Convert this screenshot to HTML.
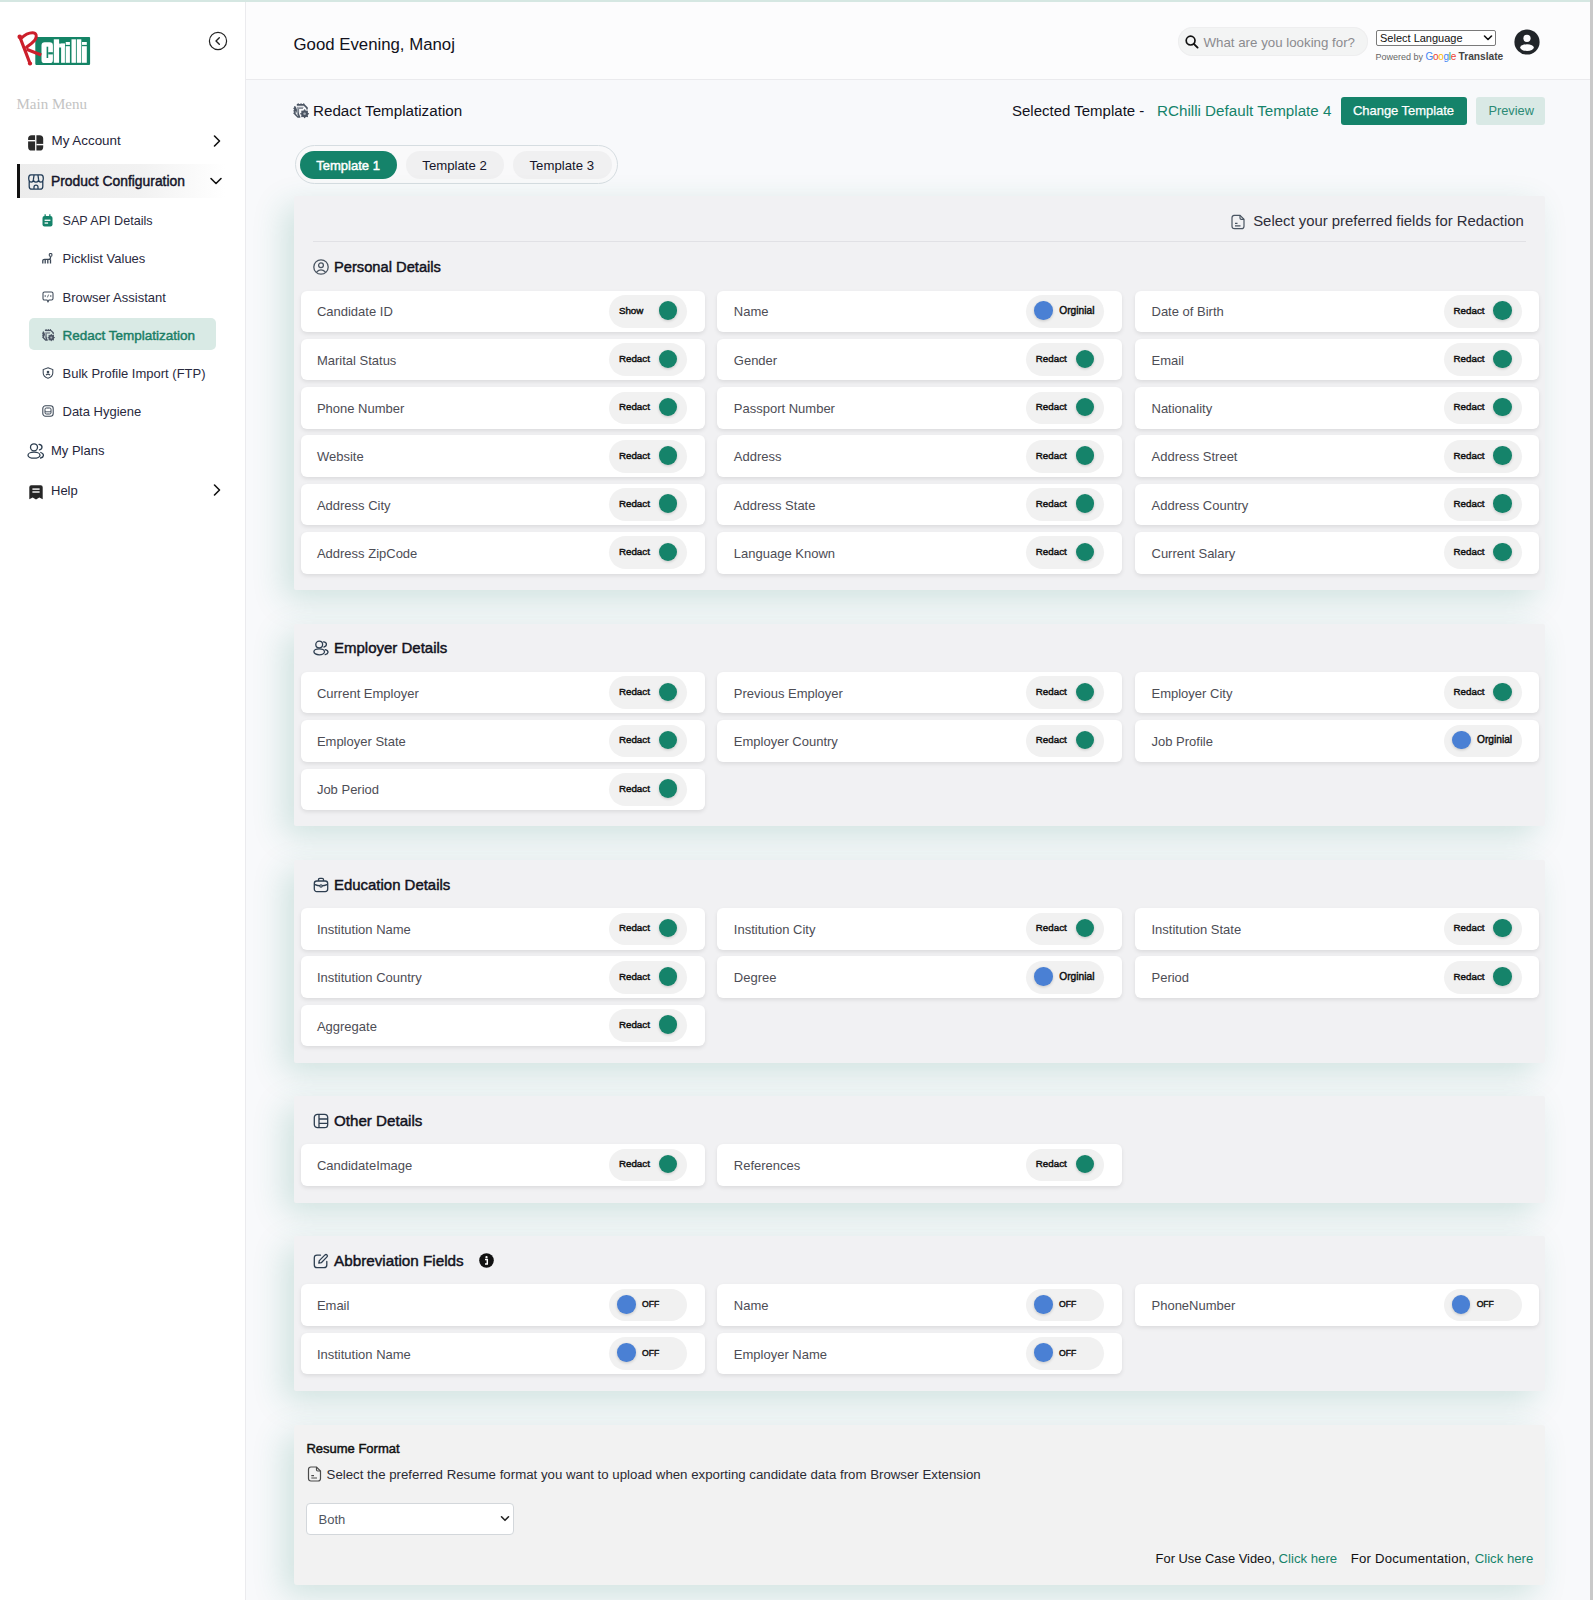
<!DOCTYPE html><html><head><meta charset="utf-8"><style>
html,body{margin:0;padding:0;width:1593px;height:1600px;overflow:hidden;background:#f8f9fb;font-family:"Liberation Sans",sans-serif;}
.t{position:absolute;white-space:nowrap;}
.r{position:absolute;}
</style></head><body>
<div class="r" style="left:0px;top:0px;width:1593px;height:2px;background:#d5e7e2"></div>
<div class="r" style="left:0px;top:2px;width:245px;height:1598px;background:#fff"></div>
<div class="r" style="left:245px;top:2px;width:1px;height:1598px;background:#ebebee"></div>
<div class="r" style="left:246px;top:2px;width:1344px;height:77px;background:#fcfcfd"></div>
<div class="r" style="left:246px;top:79px;width:1344px;height:1px;background:#eaeaed"></div>
<svg class="r" style="left:10px;top:25px;" width="90" height="45" viewBox="0 0 90 45">
<rect x="25.3" y="11.9" width="54.8" height="28" rx="0.8" fill="#148466"/>
<rect x="31.5" y="17.2" width="11.4" height="20.9" rx="3.2" fill="#fff"/><rect x="43.8" y="14.3" width="5.300000000000001" height="23.5" fill="#fff"/><rect x="49.1" y="18.6" width="5.799999999999997" height="3.9000000000000004" fill="#fff"/><rect x="51.1" y="18.6" width="3.799999999999997" height="19.200000000000003" fill="#fff"/><rect x="55.7" y="17" width="4.199999999999999" height="2.9000000000000004" fill="#fff"/><rect x="55.7" y="21.2" width="4.199999999999999" height="16.6" fill="#fff"/><rect x="61.5" y="14.3" width="4.399999999999999" height="23.5" fill="#fff"/><rect x="66.8" y="14.3" width="4.5" height="23.5" fill="#fff"/><rect x="72" y="17" width="4.799999999999997" height="2.9000000000000004" fill="#fff"/><rect x="72" y="21.2" width="4.799999999999997" height="16.6" fill="#fff"/>
<rect x="36.6" y="21.7" width="1.6" height="11.3" fill="#148466"/>
<rect x="38.2" y="27.2" width="4.7" height="2.2" fill="#148466"/>
<path d="M9.75 11.75 L20 38.5" stroke="#cc1f2b" stroke-width="3.2" stroke-linecap="round" fill="none"/>
<path d="M11 13.5 C15 9.5 19 7.8 22.5 7.8 C26.5 7.8 27 11 25.5 14 C24 17 20 19.5 16.5 22.25" stroke="#cc1f2b" stroke-width="3" stroke-linecap="round" fill="none"/>
<path d="M16.5 24.25 L31.25 30" stroke="#cc1f2b" stroke-width="3.2" stroke-linecap="butt" fill="none"/>
<circle cx="9.75" cy="11.75" r="2.3" fill="#cc1f2b"/>
<circle cx="20" cy="38.5" r="2.1" fill="#cc1f2b"/>
</svg>
<svg class="r" style="left:208px;top:31px;" width="20" height="20" viewBox="0 0 20 20"><circle cx="10" cy="10" r="8.6" stroke="#222" stroke-width="1.2" fill="none"/><path d="M11.3 6.8 L8 10 L11.3 13.2" stroke="#222" stroke-width="1.4" fill="none" stroke-linecap="round" stroke-linejoin="round"/></svg>
<div class="t" style="left:16.5px;top:94.00px;line-height:20px;font-size:15px;font-weight:400;color:#c3c3c3;font-family:'Liberation Serif', serif;">Main Menu</div>
<svg class="r" style="left:28px;top:134.5px;" width="16" height="16" viewBox="0 0 16 16"><rect x="0.1" y="0.2" width="15.1" height="15.3" rx="3.6" fill="#2b2b2b"/><rect x="7.1" y="0" width="1.3" height="16" fill="#fff"/><rect x="0" y="5" width="7.1" height="1.4" fill="#fff"/><rect x="8.4" y="8.9" width="8" height="1.4" fill="#fff"/></svg>
<div class="t" style="left:51.5px;top:131.00px;line-height:20px;font-size:13.4px;font-weight:400;color:#25253a;font-family:'Liberation Sans', sans-serif;">My Account</div>
<svg class="r" style="left:210px;top:133px;" width="14" height="16" viewBox="0 0 14 16"><path d="M4.5 3 L9.5 8 L4.5 13" stroke="#111" stroke-width="1.6" fill="none" stroke-linecap="round" stroke-linejoin="round"/></svg>
<div class="r" style="left:17px;top:164px;width:208px;height:34px;background:linear-gradient(90deg,#ececec 0%,#f2f2f2 60%,#ffffff 100%)"></div>
<div class="r" style="left:17px;top:164px;width:3px;height:34px;background:#111"></div>
<svg class="r" style="left:28px;top:174px;" width="16" height="16" viewBox="0 0 16 16"><path d="M2.8 0.8 H13.2 Q15.3 0.8 15.3 4.3 Q15.3 8 12.9 8 Q10.6 8 10.6 5.4 Q10.6 8 8 8 Q5.4 8 5.4 5.4 Q5.4 8 3.1 8 Q0.7 8 0.7 4.3 Q0.7 0.8 2.8 0.8 Z M5.4 5.4 L6.1 0.8 M10.6 5.4 L9.9 0.8 M1.2 7.2 V12.4 Q1.2 15.2 4 15.2 H12 Q14.8 15.2 14.8 12.4 V7.2 M6 15.2 V13 Q6 11 8 11 Q10 11 10 13 V15.2" stroke="#1f3a56" stroke-width="1.25" fill="none" stroke-linejoin="round"/></svg>
<div class="t" style="left:51px;top:171.00px;line-height:20px;font-size:13.85px;font-weight:400;color:#15152a;font-family:'Liberation Sans', sans-serif;-webkit-text-stroke:0.45px #15152a;">Product Configuration</div>
<svg class="r" style="left:208px;top:173px;" width="16" height="16" viewBox="0 0 16 16"><path d="M3 5.5 L8 10.5 L13 5.5" stroke="#111" stroke-width="1.6" fill="none" stroke-linecap="round" stroke-linejoin="round"/></svg>
<div class="r" style="left:29px;top:318.2px;width:186.5px;height:32.3px;background:#d9eae5;border-radius:5px"></div>
<div class="t" style="left:62.5px;top:210.80px;line-height:20px;font-size:12.6px;font-weight:400;color:#2a2a3e;font-family:'Liberation Sans', sans-serif;">SAP API Details</div>
<div class="t" style="left:62.5px;top:249.00px;line-height:20px;font-size:13px;font-weight:400;color:#2a2a3e;font-family:'Liberation Sans', sans-serif;">Picklist Values</div>
<div class="t" style="left:62.5px;top:287.60px;line-height:20px;font-size:13px;font-weight:400;color:#2a2a3e;font-family:'Liberation Sans', sans-serif;">Browser Assistant</div>
<div class="t" style="left:62.5px;top:325.60px;line-height:20px;font-size:13.5px;font-weight:400;color:#1b7e66;font-family:'Liberation Sans', sans-serif;-webkit-text-stroke:0.45px #1b7e66;">Redact Templatization</div>
<div class="t" style="left:62.5px;top:364.00px;line-height:20px;font-size:13px;font-weight:400;color:#2a2a3e;font-family:'Liberation Sans', sans-serif;">Bulk Profile Import (FTP)</div>
<div class="t" style="left:62.5px;top:402.40px;line-height:20px;font-size:13px;font-weight:400;color:#2a2a3e;font-family:'Liberation Sans', sans-serif;">Data Hygiene</div>
<svg class="r" style="left:42px;top:214px;" width="11" height="13" viewBox="0 0 11 13"><rect x="0.5" y="2" width="10" height="10.5" rx="2" fill="#15836a"/><rect x="2.5" y="0.3" width="1.3" height="3" fill="#15836a"/><rect x="7.2" y="0.3" width="1.3" height="3" fill="#15836a"/><rect x="2.6" y="5.6" width="5.8" height="1.3" fill="#fff"/><rect x="2.6" y="8.4" width="3.5" height="1.3" fill="#fff"/></svg>
<svg class="r" style="left:42px;top:253px;" width="11" height="11" viewBox="0 0 11 11"><path d="M0.8 10.5 V7.6 Q0.8 6.4 2.5 6.4 H6.5 Q8.5 6.4 8.5 4.5 V3.5 M3.2 6.4 V10.5 M5.8 6.4 V10.5 M8.5 6.5 V10.5" stroke="#3b4756" stroke-width="1.3" fill="none"/><circle cx="8.6" cy="1.9" r="1.4" stroke="#3b4756" stroke-width="1.1" fill="none"/></svg>
<svg class="r" style="left:42px;top:291px;" width="12" height="12" viewBox="0 0 12 12"><path d="M2.5 1 H9.5 Q11 1 11 2.5 V7.5 Q11 9 9.5 9 H7 L6 10.8 L5 9 H2.5 Q1 9 1 7.5 V2.5 Q1 1 2.5 1 Z" stroke="#3b4756" stroke-width="1.05" fill="none"/><path d="M3.6 4 L2.8 5 L3.6 6 M8.4 4 L9.2 5 L8.4 6 M6.6 3.6 L5.4 6.4" stroke="#3b4756" stroke-width="0.8" fill="none"/></svg>
<svg class="r" style="left:41.5px;top:328.5px;" width="13" height="13" viewBox="3.2 3.2 16 16"><path d="M6.8 4.9 H14 L17 7.9 V9.6 M9.6 17 H7.9 L4.9 14 V6.8 Z" stroke="#4b5563" stroke-width="1.6" fill="none" stroke-linejoin="round"/>
<rect x="7.6" y="3.4" width="1.3" height="1.6" fill="#4b5563"/><rect x="10.4" y="3.4" width="1.3" height="1.6" fill="#4b5563"/><rect x="13" y="3.4" width="1.3" height="1.6" fill="#4b5563"/>
<rect x="3.4" y="7.8" width="1.6" height="1.3" fill="#4b5563"/><rect x="3.4" y="10.2" width="1.6" height="1.3" fill="#4b5563"/><rect x="3.4" y="12.6" width="1.6" height="1.3" fill="#4b5563"/>
<path d="M7.4 15.2 V7.2 H13.6" stroke="#9aa1aa" stroke-width="1.1" fill="none"/><path d="M8.6 14.6 V8.3 H13" stroke="#4b5563" stroke-width="0.8" fill="none"/>
<circle cx="14.6" cy="13.8" r="3.5" fill="#4b5563"/>
<circle cx="14.6" cy="10.1" r="0.8" fill="#4b5563"/><circle cx="14.6" cy="17.5" r="0.8" fill="#4b5563"/><circle cx="10.9" cy="13.8" r="0.8" fill="#4b5563"/><circle cx="18.3" cy="13.8" r="0.8" fill="#4b5563"/>
<circle cx="12" cy="11.2" r="0.8" fill="#4b5563"/><circle cx="17.2" cy="11.2" r="0.8" fill="#4b5563"/><circle cx="12" cy="16.4" r="0.8" fill="#4b5563"/><circle cx="17.2" cy="16.4" r="0.8" fill="#4b5563"/>
<circle cx="14.6" cy="13.8" r="1.3" fill="#a9b0b8"/></svg>
<svg class="r" style="left:42px;top:367px;" width="12" height="12" viewBox="0 0 12 12"><path d="M6 0.8 L10.8 2.5 V6 Q10.8 9.5 6 11.3 Q1.2 9.5 1.2 6 V2.5 Z" stroke="#3b4756" stroke-width="1.05" fill="none"/><circle cx="6" cy="5" r="1.3" fill="#3b4756"/><path d="M4 8.2 Q6 6 8 8.2" stroke="#3b4756" stroke-width="1.2" fill="none"/></svg>
<svg class="r" style="left:42px;top:405px;" width="12" height="12" viewBox="0 0 12 12"><rect x="0.8" y="0.8" width="10.4" height="10.4" rx="2.8" stroke="#3b4756" stroke-width="1.05" fill="none"/><rect x="3" y="3" width="6" height="6" rx="1.3" stroke="#3b4756" stroke-width="1" fill="none"/><path d="M3 6.8 H9" stroke="#3b4756" stroke-width="0.9"/></svg>
<svg class="r" style="left:27px;top:443px;" width="18" height="16" viewBox="0 0 18 16"><circle cx="7" cy="4.3" r="3.5" stroke="#2d3e50" stroke-width="1.3" fill="none"/><ellipse cx="7" cy="12.2" rx="6" ry="3" stroke="#2d3e50" stroke-width="1.3" fill="none"/><path d="M12 1.3 Q15 1.6 15 4 Q15 6.2 12.5 6.8 M13.8 9.5 Q16.6 10.5 16.4 12.6 Q16.2 14.4 13.6 15" stroke="#2d3e50" stroke-width="1.3" fill="none" stroke-linecap="round"/></svg>
<div class="t" style="left:51px;top:441.00px;line-height:20px;font-size:13px;font-weight:400;color:#25253a;font-family:'Liberation Sans', sans-serif;">My Plans</div>
<svg class="r" style="left:28.8px;top:484.6px;" width="14" height="15" viewBox="0 0 14 15"><path d="M0.3 2.2 Q0.3 0.2 2.3 0.2 H11.7 Q13.7 0.2 13.7 2.2 V14.2 L10.3 12.6 L7 14.4 L3.7 12.6 L0.3 14.2 Z" fill="#262626"/><rect x="3.4" y="3.4" width="7.2" height="1.4" fill="#fff"/><rect x="3.4" y="6.3" width="7.2" height="1.4" fill="#fff"/></svg>
<div class="t" style="left:51px;top:481.00px;line-height:20px;font-size:13px;font-weight:400;color:#25253a;font-family:'Liberation Sans', sans-serif;">Help</div>
<svg class="r" style="left:210px;top:482px;" width="14" height="16" viewBox="0 0 14 16"><path d="M4.5 3 L9.5 8 L4.5 13" stroke="#111" stroke-width="1.6" fill="none" stroke-linecap="round" stroke-linejoin="round"/></svg>
<div class="t" style="left:293.5px;top:35.00px;line-height:20px;font-size:16.8px;font-weight:400;color:#121220;font-family:'Liberation Sans', sans-serif;">Good Evening, Manoj</div>
<div class="r" style="left:1178px;top:26.5px;width:190px;height:29px;background:#f3f4f4;border-radius:15px;box-shadow:inset 0 0 0 1px #eeeeef"></div>
<svg class="r" style="left:1185px;top:35px;" width="14" height="14" viewBox="0 0 14 14"><circle cx="5.6" cy="5.6" r="4.4" stroke="#111" stroke-width="1.7" fill="none"/><path d="M8.8 8.8 L12.6 12.6" stroke="#111" stroke-width="1.9" stroke-linecap="round"/></svg>
<div class="t" style="left:1203.5px;top:32.60px;line-height:20px;font-size:13.3px;font-weight:400;color:#8b8b8f;font-family:'Liberation Sans', sans-serif;">What are you looking for?</div>
<div class="r" style="left:1376px;top:30px;width:120px;height:16px;background:#fff;border:1px solid #7a7a7a;border-radius:2px;box-sizing:border-box"></div>
<div class="t" style="left:1380px;top:30.80px;line-height:14px;font-size:11px;font-weight:400;color:#111;font-family:'Liberation Sans', sans-serif;">Select Language</div>
<svg class="r" style="left:1482px;top:33px;" width="12" height="10" viewBox="0 0 12 10"><path d="M2.5 3 L6 6.5 L9.5 3" stroke="#111" stroke-width="1.6" fill="none" stroke-linecap="round" stroke-linejoin="round"/></svg>
<div class="t" style="left:1375.5px;top:50.50px;line-height:12px;font-size:9px;font-weight:400;color:#666;font-family:'Liberation Sans', sans-serif;">Powered by <span style="font-weight:400;font-size:10px;letter-spacing:-0.3px"><span style="color:#4285f4">G</span><span style="color:#ea4335">o</span><span style="color:#fbbc05">o</span><span style="color:#4285f4">g</span><span style="color:#34a853">l</span><span style="color:#ea4335">e</span></span> <b style="color:#444;font-size:10.2px">Translate</b></div>
<svg class="r" style="left:1514px;top:29px;" width="26" height="26" viewBox="0 0 26 26"><circle cx="13" cy="13" r="12.6" fill="#212529"/><circle cx="13" cy="9.3" r="3.6" fill="#fcfcfd"/><ellipse cx="13" cy="18.6" rx="6.8" ry="3.3" fill="#fcfcfd"/></svg>
<svg class="r" style="left:290px;top:100px;" width="22" height="22" viewBox="0 0 22 22"><path d="M6.8 4.9 H14 L17 7.9 V9.6 M9.6 17 H7.9 L4.9 14 V6.8 Z" stroke="#4b5563" stroke-width="1.6" fill="none" stroke-linejoin="round"/>
<rect x="7.6" y="3.4" width="1.3" height="1.6" fill="#4b5563"/><rect x="10.4" y="3.4" width="1.3" height="1.6" fill="#4b5563"/><rect x="13" y="3.4" width="1.3" height="1.6" fill="#4b5563"/>
<rect x="3.4" y="7.8" width="1.6" height="1.3" fill="#4b5563"/><rect x="3.4" y="10.2" width="1.6" height="1.3" fill="#4b5563"/><rect x="3.4" y="12.6" width="1.6" height="1.3" fill="#4b5563"/>
<path d="M7.4 15.2 V7.2 H13.6" stroke="#9aa1aa" stroke-width="1.1" fill="none"/><path d="M8.6 14.6 V8.3 H13" stroke="#4b5563" stroke-width="0.8" fill="none"/>
<circle cx="14.6" cy="13.8" r="3.5" fill="#4b5563"/>
<circle cx="14.6" cy="10.1" r="0.8" fill="#4b5563"/><circle cx="14.6" cy="17.5" r="0.8" fill="#4b5563"/><circle cx="10.9" cy="13.8" r="0.8" fill="#4b5563"/><circle cx="18.3" cy="13.8" r="0.8" fill="#4b5563"/>
<circle cx="12" cy="11.2" r="0.8" fill="#4b5563"/><circle cx="17.2" cy="11.2" r="0.8" fill="#4b5563"/><circle cx="12" cy="16.4" r="0.8" fill="#4b5563"/><circle cx="17.2" cy="16.4" r="0.8" fill="#4b5563"/>
<circle cx="14.6" cy="13.8" r="1.3" fill="#a9b0b8"/></svg>
<div class="t" style="left:313px;top:101.00px;line-height:20px;font-size:15.2px;font-weight:400;color:#121220;font-family:'Liberation Sans', sans-serif;">Redact Templatization</div>
<div class="t" style="left:1012px;top:101.00px;line-height:20px;font-size:15px;font-weight:400;color:#121220;font-family:'Liberation Sans', sans-serif;">Selected Template -</div>
<div class="t" style="left:1157px;top:101.00px;line-height:20px;font-size:15.2px;font-weight:400;color:#15836a;font-family:'Liberation Sans', sans-serif;">RChilli Default Template 4</div>
<div class="r" style="left:1341px;top:96.8px;width:126px;height:28.3px;background:#15836a;border-radius:3px"></div>
<div class="t" style="left:1353px;top:101.40px;line-height:20px;font-size:13px;font-weight:400;color:#fff;font-family:'Liberation Sans', sans-serif;letter-spacing:-0.05px;-webkit-text-stroke:0.25px #fff">Change Template</div>
<div class="r" style="left:1476px;top:96.8px;width:69px;height:28.3px;background:#d9e9e5;border-radius:3px"></div>
<div class="t" style="left:1488.4px;top:101.40px;line-height:20px;font-size:12.8px;font-weight:400;color:#2b8a74;font-family:'Liberation Sans', sans-serif;">Preview</div>
<div class="r" style="left:294.6px;top:145.3px;width:323.3px;height:38.3px;border:1.5px solid #d6dde1;border-radius:20px;box-sizing:border-box;background:#f9f9fa"></div>
<div class="r" style="left:300px;top:150.6px;width:97.2px;height:28.3px;background:#15836a;border-radius:15px"></div>
<div class="t" style="left:316.3px;top:156.20px;line-height:20px;font-size:13px;font-weight:400;color:#fff;font-family:'Liberation Sans', sans-serif;-webkit-text-stroke:0.45px #fff;">Template 1</div>
<div class="r" style="left:405.7px;top:150.6px;width:98.3px;height:28.3px;background:#f0f0f1;border-radius:15px"></div>
<div class="t" style="left:422.3px;top:156.20px;line-height:20px;font-size:13.2px;font-weight:400;color:#15152a;font-family:'Liberation Sans', sans-serif;">Template 2</div>
<div class="r" style="left:512.7px;top:150.6px;width:99.5px;height:28.3px;background:#f0f0f1;border-radius:15px"></div>
<div class="t" style="left:529.5px;top:156.20px;line-height:20px;font-size:13.2px;font-weight:400;color:#15152a;font-family:'Liberation Sans', sans-serif;">Template 3</div>
<div class="r" style="left:294px;top:196.4px;width:1251px;height:393.30000000000007px;background:#f1f1f3;box-shadow:-10px 10px 32px rgba(30,135,108,0.19);border-radius:2px"></div>
<svg class="r" style="left:1229.5px;top:213.7px;" width="16" height="16" viewBox="0 0 16 16"><path d="M3.5 1.3 H10 L14 5.3 V12.2 Q14 14.7 11.5 14.7 H4.5 Q2 14.7 2 12.2 V3.8 Q2 1.3 4.5 1.3" stroke="#4a5562" stroke-width="1.2" fill="none"/><path d="M10 1.3 V4 Q10 5.3 11.3 5.3 H14 M5 9.3 H7.5 M5 11.8 H10.5" stroke="#4a5562" stroke-width="1.2" fill="none"/></svg>
<div class="t" style="left:1253.2px;top:211.30px;line-height:20px;font-size:14.9px;font-weight:400;color:#2e2e3a;font-family:'Liberation Sans', sans-serif;">Select your preferred fields for Redaction</div>
<div class="r" style="left:312.8px;top:241px;width:1213px;height:1px;background:#e1e1e5"></div>
<svg class="r" style="left:313px;top:259px;" width="16" height="16" viewBox="0 0 16 16"><circle cx="8" cy="8" r="7.2" stroke="#4a5562" stroke-width="1.3" fill="none"/><circle cx="8" cy="6.3" r="2.4" stroke="#4a5562" stroke-width="1.3" fill="none"/><path d="M3.6 13 Q8 8.6 12.4 13" stroke="#4a5562" stroke-width="1.3" fill="none"/></svg>
<div class="t" style="left:334px;top:257.00px;line-height:20px;font-size:14.7px;font-weight:400;color:#121220;font-family:'Liberation Sans', sans-serif;-webkit-text-stroke:0.45px #121220;">Personal Details</div>
<div class="r" style="left:300.5px;top:290.5px;width:404.2px;height:41.5px;background:#fff;border-radius:6px;box-shadow:0 2px 4px rgba(0,0,0,0.09)"></div>
<div class="t" style="left:316.9px;top:302.40px;line-height:20px;font-size:13px;font-weight:400;color:#4d4d55;font-family:'Liberation Sans', sans-serif;">Candidate ID</div>
<div class="r" style="left:608.9px;top:294.9px;width:78.5px;height:32.8px;background:#f1f1f1;border-radius:17px"></div>
<div class="t" style="left:618.9px;top:303.60px;line-height:14px;font-size:9.8px;font-weight:400;color:#111;font-family:'Liberation Sans', sans-serif;-webkit-text-stroke:0.45px #111;">Show</div>
<div class="r" style="left:658.6999999999999px;top:301.2px;width:18.5px;height:18.5px;background:#15836a;border-radius:50%;box-shadow:0 1px 3px rgba(0,0,0,0.18)"></div>
<div class="r" style="left:717.4px;top:290.5px;width:404.2px;height:41.5px;background:#fff;border-radius:6px;box-shadow:0 2px 4px rgba(0,0,0,0.09)"></div>
<div class="t" style="left:733.8px;top:302.40px;line-height:20px;font-size:13px;font-weight:400;color:#4d4d55;font-family:'Liberation Sans', sans-serif;">Name</div>
<div class="r" style="left:1025.8px;top:294.9px;width:78.5px;height:32.8px;background:#f1f1f1;border-radius:17px"></div>
<div class="r" style="left:1034.3px;top:301.2px;width:18.5px;height:18.5px;background:#4a80d4;border-radius:50%;box-shadow:0 1px 3px rgba(0,0,0,0.18)"></div>
<div class="t" style="left:1059.3px;top:303.60px;line-height:14px;font-size:10.2px;font-weight:400;color:#111;font-family:'Liberation Sans', sans-serif;-webkit-text-stroke:0.45px #111;">Orginial</div>
<div class="r" style="left:1135.1px;top:290.5px;width:404.2px;height:41.5px;background:#fff;border-radius:6px;box-shadow:0 2px 4px rgba(0,0,0,0.09)"></div>
<div class="t" style="left:1151.5px;top:302.40px;line-height:20px;font-size:13px;font-weight:400;color:#4d4d55;font-family:'Liberation Sans', sans-serif;">Date of Birth</div>
<div class="r" style="left:1443.5px;top:294.9px;width:78.5px;height:32.8px;background:#f1f1f1;border-radius:17px"></div>
<div class="t" style="left:1453.5px;top:303.60px;line-height:14px;font-size:9.8px;font-weight:400;color:#111;font-family:'Liberation Sans', sans-serif;-webkit-text-stroke:0.45px #111;">Redact</div>
<div class="r" style="left:1493.3px;top:301.2px;width:18.5px;height:18.5px;background:#15836a;border-radius:50%;box-shadow:0 1px 3px rgba(0,0,0,0.18)"></div>
<div class="r" style="left:300.5px;top:338.8px;width:404.2px;height:41.5px;background:#fff;border-radius:6px;box-shadow:0 2px 4px rgba(0,0,0,0.09)"></div>
<div class="t" style="left:316.9px;top:350.70px;line-height:20px;font-size:13px;font-weight:400;color:#4d4d55;font-family:'Liberation Sans', sans-serif;">Marital Status</div>
<div class="r" style="left:608.9px;top:343.2px;width:78.5px;height:32.8px;background:#f1f1f1;border-radius:17px"></div>
<div class="t" style="left:618.9px;top:351.90px;line-height:14px;font-size:9.8px;font-weight:400;color:#111;font-family:'Liberation Sans', sans-serif;-webkit-text-stroke:0.45px #111;">Redact</div>
<div class="r" style="left:658.6999999999999px;top:349.5px;width:18.5px;height:18.5px;background:#15836a;border-radius:50%;box-shadow:0 1px 3px rgba(0,0,0,0.18)"></div>
<div class="r" style="left:717.4px;top:338.8px;width:404.2px;height:41.5px;background:#fff;border-radius:6px;box-shadow:0 2px 4px rgba(0,0,0,0.09)"></div>
<div class="t" style="left:733.8px;top:350.70px;line-height:20px;font-size:13px;font-weight:400;color:#4d4d55;font-family:'Liberation Sans', sans-serif;">Gender</div>
<div class="r" style="left:1025.8px;top:343.2px;width:78.5px;height:32.8px;background:#f1f1f1;border-radius:17px"></div>
<div class="t" style="left:1035.8px;top:351.90px;line-height:14px;font-size:9.8px;font-weight:400;color:#111;font-family:'Liberation Sans', sans-serif;-webkit-text-stroke:0.45px #111;">Redact</div>
<div class="r" style="left:1075.6px;top:349.5px;width:18.5px;height:18.5px;background:#15836a;border-radius:50%;box-shadow:0 1px 3px rgba(0,0,0,0.18)"></div>
<div class="r" style="left:1135.1px;top:338.8px;width:404.2px;height:41.5px;background:#fff;border-radius:6px;box-shadow:0 2px 4px rgba(0,0,0,0.09)"></div>
<div class="t" style="left:1151.5px;top:350.70px;line-height:20px;font-size:13px;font-weight:400;color:#4d4d55;font-family:'Liberation Sans', sans-serif;">Email</div>
<div class="r" style="left:1443.5px;top:343.2px;width:78.5px;height:32.8px;background:#f1f1f1;border-radius:17px"></div>
<div class="t" style="left:1453.5px;top:351.90px;line-height:14px;font-size:9.8px;font-weight:400;color:#111;font-family:'Liberation Sans', sans-serif;-webkit-text-stroke:0.45px #111;">Redact</div>
<div class="r" style="left:1493.3px;top:349.5px;width:18.5px;height:18.5px;background:#15836a;border-radius:50%;box-shadow:0 1px 3px rgba(0,0,0,0.18)"></div>
<div class="r" style="left:300.5px;top:387.1px;width:404.2px;height:41.5px;background:#fff;border-radius:6px;box-shadow:0 2px 4px rgba(0,0,0,0.09)"></div>
<div class="t" style="left:316.9px;top:399.00px;line-height:20px;font-size:13px;font-weight:400;color:#4d4d55;font-family:'Liberation Sans', sans-serif;">Phone Number</div>
<div class="r" style="left:608.9px;top:391.5px;width:78.5px;height:32.8px;background:#f1f1f1;border-radius:17px"></div>
<div class="t" style="left:618.9px;top:400.20px;line-height:14px;font-size:9.8px;font-weight:400;color:#111;font-family:'Liberation Sans', sans-serif;-webkit-text-stroke:0.45px #111;">Redact</div>
<div class="r" style="left:658.6999999999999px;top:397.8px;width:18.5px;height:18.5px;background:#15836a;border-radius:50%;box-shadow:0 1px 3px rgba(0,0,0,0.18)"></div>
<div class="r" style="left:717.4px;top:387.1px;width:404.2px;height:41.5px;background:#fff;border-radius:6px;box-shadow:0 2px 4px rgba(0,0,0,0.09)"></div>
<div class="t" style="left:733.8px;top:399.00px;line-height:20px;font-size:13px;font-weight:400;color:#4d4d55;font-family:'Liberation Sans', sans-serif;">Passport Number</div>
<div class="r" style="left:1025.8px;top:391.5px;width:78.5px;height:32.8px;background:#f1f1f1;border-radius:17px"></div>
<div class="t" style="left:1035.8px;top:400.20px;line-height:14px;font-size:9.8px;font-weight:400;color:#111;font-family:'Liberation Sans', sans-serif;-webkit-text-stroke:0.45px #111;">Redact</div>
<div class="r" style="left:1075.6px;top:397.8px;width:18.5px;height:18.5px;background:#15836a;border-radius:50%;box-shadow:0 1px 3px rgba(0,0,0,0.18)"></div>
<div class="r" style="left:1135.1px;top:387.1px;width:404.2px;height:41.5px;background:#fff;border-radius:6px;box-shadow:0 2px 4px rgba(0,0,0,0.09)"></div>
<div class="t" style="left:1151.5px;top:399.00px;line-height:20px;font-size:13px;font-weight:400;color:#4d4d55;font-family:'Liberation Sans', sans-serif;">Nationality</div>
<div class="r" style="left:1443.5px;top:391.5px;width:78.5px;height:32.8px;background:#f1f1f1;border-radius:17px"></div>
<div class="t" style="left:1453.5px;top:400.20px;line-height:14px;font-size:9.8px;font-weight:400;color:#111;font-family:'Liberation Sans', sans-serif;-webkit-text-stroke:0.45px #111;">Redact</div>
<div class="r" style="left:1493.3px;top:397.8px;width:18.5px;height:18.5px;background:#15836a;border-radius:50%;box-shadow:0 1px 3px rgba(0,0,0,0.18)"></div>
<div class="r" style="left:300.5px;top:435.4px;width:404.2px;height:41.5px;background:#fff;border-radius:6px;box-shadow:0 2px 4px rgba(0,0,0,0.09)"></div>
<div class="t" style="left:316.9px;top:447.30px;line-height:20px;font-size:13px;font-weight:400;color:#4d4d55;font-family:'Liberation Sans', sans-serif;">Website</div>
<div class="r" style="left:608.9px;top:439.79999999999995px;width:78.5px;height:32.8px;background:#f1f1f1;border-radius:17px"></div>
<div class="t" style="left:618.9px;top:448.50px;line-height:14px;font-size:9.8px;font-weight:400;color:#111;font-family:'Liberation Sans', sans-serif;-webkit-text-stroke:0.45px #111;">Redact</div>
<div class="r" style="left:658.6999999999999px;top:446.09999999999997px;width:18.5px;height:18.5px;background:#15836a;border-radius:50%;box-shadow:0 1px 3px rgba(0,0,0,0.18)"></div>
<div class="r" style="left:717.4px;top:435.4px;width:404.2px;height:41.5px;background:#fff;border-radius:6px;box-shadow:0 2px 4px rgba(0,0,0,0.09)"></div>
<div class="t" style="left:733.8px;top:447.30px;line-height:20px;font-size:13px;font-weight:400;color:#4d4d55;font-family:'Liberation Sans', sans-serif;">Address</div>
<div class="r" style="left:1025.8px;top:439.79999999999995px;width:78.5px;height:32.8px;background:#f1f1f1;border-radius:17px"></div>
<div class="t" style="left:1035.8px;top:448.50px;line-height:14px;font-size:9.8px;font-weight:400;color:#111;font-family:'Liberation Sans', sans-serif;-webkit-text-stroke:0.45px #111;">Redact</div>
<div class="r" style="left:1075.6px;top:446.09999999999997px;width:18.5px;height:18.5px;background:#15836a;border-radius:50%;box-shadow:0 1px 3px rgba(0,0,0,0.18)"></div>
<div class="r" style="left:1135.1px;top:435.4px;width:404.2px;height:41.5px;background:#fff;border-radius:6px;box-shadow:0 2px 4px rgba(0,0,0,0.09)"></div>
<div class="t" style="left:1151.5px;top:447.30px;line-height:20px;font-size:13px;font-weight:400;color:#4d4d55;font-family:'Liberation Sans', sans-serif;">Address Street</div>
<div class="r" style="left:1443.5px;top:439.79999999999995px;width:78.5px;height:32.8px;background:#f1f1f1;border-radius:17px"></div>
<div class="t" style="left:1453.5px;top:448.50px;line-height:14px;font-size:9.8px;font-weight:400;color:#111;font-family:'Liberation Sans', sans-serif;-webkit-text-stroke:0.45px #111;">Redact</div>
<div class="r" style="left:1493.3px;top:446.09999999999997px;width:18.5px;height:18.5px;background:#15836a;border-radius:50%;box-shadow:0 1px 3px rgba(0,0,0,0.18)"></div>
<div class="r" style="left:300.5px;top:483.7px;width:404.2px;height:41.5px;background:#fff;border-radius:6px;box-shadow:0 2px 4px rgba(0,0,0,0.09)"></div>
<div class="t" style="left:316.9px;top:495.60px;line-height:20px;font-size:13px;font-weight:400;color:#4d4d55;font-family:'Liberation Sans', sans-serif;">Address City</div>
<div class="r" style="left:608.9px;top:488.09999999999997px;width:78.5px;height:32.8px;background:#f1f1f1;border-radius:17px"></div>
<div class="t" style="left:618.9px;top:496.80px;line-height:14px;font-size:9.8px;font-weight:400;color:#111;font-family:'Liberation Sans', sans-serif;-webkit-text-stroke:0.45px #111;">Redact</div>
<div class="r" style="left:658.6999999999999px;top:494.4px;width:18.5px;height:18.5px;background:#15836a;border-radius:50%;box-shadow:0 1px 3px rgba(0,0,0,0.18)"></div>
<div class="r" style="left:717.4px;top:483.7px;width:404.2px;height:41.5px;background:#fff;border-radius:6px;box-shadow:0 2px 4px rgba(0,0,0,0.09)"></div>
<div class="t" style="left:733.8px;top:495.60px;line-height:20px;font-size:13px;font-weight:400;color:#4d4d55;font-family:'Liberation Sans', sans-serif;">Address State</div>
<div class="r" style="left:1025.8px;top:488.09999999999997px;width:78.5px;height:32.8px;background:#f1f1f1;border-radius:17px"></div>
<div class="t" style="left:1035.8px;top:496.80px;line-height:14px;font-size:9.8px;font-weight:400;color:#111;font-family:'Liberation Sans', sans-serif;-webkit-text-stroke:0.45px #111;">Redact</div>
<div class="r" style="left:1075.6px;top:494.4px;width:18.5px;height:18.5px;background:#15836a;border-radius:50%;box-shadow:0 1px 3px rgba(0,0,0,0.18)"></div>
<div class="r" style="left:1135.1px;top:483.7px;width:404.2px;height:41.5px;background:#fff;border-radius:6px;box-shadow:0 2px 4px rgba(0,0,0,0.09)"></div>
<div class="t" style="left:1151.5px;top:495.60px;line-height:20px;font-size:13px;font-weight:400;color:#4d4d55;font-family:'Liberation Sans', sans-serif;">Address Country</div>
<div class="r" style="left:1443.5px;top:488.09999999999997px;width:78.5px;height:32.8px;background:#f1f1f1;border-radius:17px"></div>
<div class="t" style="left:1453.5px;top:496.80px;line-height:14px;font-size:9.8px;font-weight:400;color:#111;font-family:'Liberation Sans', sans-serif;-webkit-text-stroke:0.45px #111;">Redact</div>
<div class="r" style="left:1493.3px;top:494.4px;width:18.5px;height:18.5px;background:#15836a;border-radius:50%;box-shadow:0 1px 3px rgba(0,0,0,0.18)"></div>
<div class="r" style="left:300.5px;top:532.0px;width:404.2px;height:41.5px;background:#fff;border-radius:6px;box-shadow:0 2px 4px rgba(0,0,0,0.09)"></div>
<div class="t" style="left:316.9px;top:543.90px;line-height:20px;font-size:13px;font-weight:400;color:#4d4d55;font-family:'Liberation Sans', sans-serif;">Address ZipCode</div>
<div class="r" style="left:608.9px;top:536.4px;width:78.5px;height:32.8px;background:#f1f1f1;border-radius:17px"></div>
<div class="t" style="left:618.9px;top:545.10px;line-height:14px;font-size:9.8px;font-weight:400;color:#111;font-family:'Liberation Sans', sans-serif;-webkit-text-stroke:0.45px #111;">Redact</div>
<div class="r" style="left:658.6999999999999px;top:542.6999999999999px;width:18.5px;height:18.5px;background:#15836a;border-radius:50%;box-shadow:0 1px 3px rgba(0,0,0,0.18)"></div>
<div class="r" style="left:717.4px;top:532.0px;width:404.2px;height:41.5px;background:#fff;border-radius:6px;box-shadow:0 2px 4px rgba(0,0,0,0.09)"></div>
<div class="t" style="left:733.8px;top:543.90px;line-height:20px;font-size:13px;font-weight:400;color:#4d4d55;font-family:'Liberation Sans', sans-serif;">Language Known</div>
<div class="r" style="left:1025.8px;top:536.4px;width:78.5px;height:32.8px;background:#f1f1f1;border-radius:17px"></div>
<div class="t" style="left:1035.8px;top:545.10px;line-height:14px;font-size:9.8px;font-weight:400;color:#111;font-family:'Liberation Sans', sans-serif;-webkit-text-stroke:0.45px #111;">Redact</div>
<div class="r" style="left:1075.6px;top:542.6999999999999px;width:18.5px;height:18.5px;background:#15836a;border-radius:50%;box-shadow:0 1px 3px rgba(0,0,0,0.18)"></div>
<div class="r" style="left:1135.1px;top:532.0px;width:404.2px;height:41.5px;background:#fff;border-radius:6px;box-shadow:0 2px 4px rgba(0,0,0,0.09)"></div>
<div class="t" style="left:1151.5px;top:543.90px;line-height:20px;font-size:13px;font-weight:400;color:#4d4d55;font-family:'Liberation Sans', sans-serif;">Current Salary</div>
<div class="r" style="left:1443.5px;top:536.4px;width:78.5px;height:32.8px;background:#f1f1f1;border-radius:17px"></div>
<div class="t" style="left:1453.5px;top:545.10px;line-height:14px;font-size:9.8px;font-weight:400;color:#111;font-family:'Liberation Sans', sans-serif;-webkit-text-stroke:0.45px #111;">Redact</div>
<div class="r" style="left:1493.3px;top:542.6999999999999px;width:18.5px;height:18.5px;background:#15836a;border-radius:50%;box-shadow:0 1px 3px rgba(0,0,0,0.18)"></div>
<div class="r" style="left:294px;top:623.9px;width:1251px;height:202.5px;background:#f1f1f3;box-shadow:-10px 10px 32px rgba(30,135,108,0.19);border-radius:2px"></div>
<svg class="r" style="left:313px;top:640.3px;" width="16" height="16" viewBox="0 0 16 16"><circle cx="6.2" cy="4.5" r="3.4" stroke="#2d3e50" stroke-width="1.3" fill="none"/><ellipse cx="6.2" cy="11.8" rx="5.3" ry="3" stroke="#2d3e50" stroke-width="1.3" fill="none"/><path d="M10.5 1.8 Q13.4 2 13.4 4.3 Q13.4 6.4 11 7 M12.2 9.6 Q15.2 10.4 15 12.4 Q14.8 14.2 12.2 14.7" stroke="#2d3e50" stroke-width="1.3" fill="none" stroke-linecap="round"/></svg>
<div class="t" style="left:334px;top:638.30px;line-height:20px;font-size:15.0px;font-weight:400;color:#121220;font-family:'Liberation Sans', sans-serif;-webkit-text-stroke:0.45px #121220;">Employer Details</div>
<div class="r" style="left:300.5px;top:671.9px;width:404.2px;height:41.5px;background:#fff;border-radius:6px;box-shadow:0 2px 4px rgba(0,0,0,0.09)"></div>
<div class="t" style="left:316.9px;top:683.80px;line-height:20px;font-size:13px;font-weight:400;color:#4d4d55;font-family:'Liberation Sans', sans-serif;">Current Employer</div>
<div class="r" style="left:608.9px;top:676.3px;width:78.5px;height:32.8px;background:#f1f1f1;border-radius:17px"></div>
<div class="t" style="left:618.9px;top:685.00px;line-height:14px;font-size:9.8px;font-weight:400;color:#111;font-family:'Liberation Sans', sans-serif;-webkit-text-stroke:0.45px #111;">Redact</div>
<div class="r" style="left:658.6999999999999px;top:682.5999999999999px;width:18.5px;height:18.5px;background:#15836a;border-radius:50%;box-shadow:0 1px 3px rgba(0,0,0,0.18)"></div>
<div class="r" style="left:717.4px;top:671.9px;width:404.2px;height:41.5px;background:#fff;border-radius:6px;box-shadow:0 2px 4px rgba(0,0,0,0.09)"></div>
<div class="t" style="left:733.8px;top:683.80px;line-height:20px;font-size:13px;font-weight:400;color:#4d4d55;font-family:'Liberation Sans', sans-serif;">Previous Employer</div>
<div class="r" style="left:1025.8px;top:676.3px;width:78.5px;height:32.8px;background:#f1f1f1;border-radius:17px"></div>
<div class="t" style="left:1035.8px;top:685.00px;line-height:14px;font-size:9.8px;font-weight:400;color:#111;font-family:'Liberation Sans', sans-serif;-webkit-text-stroke:0.45px #111;">Redact</div>
<div class="r" style="left:1075.6px;top:682.5999999999999px;width:18.5px;height:18.5px;background:#15836a;border-radius:50%;box-shadow:0 1px 3px rgba(0,0,0,0.18)"></div>
<div class="r" style="left:1135.1px;top:671.9px;width:404.2px;height:41.5px;background:#fff;border-radius:6px;box-shadow:0 2px 4px rgba(0,0,0,0.09)"></div>
<div class="t" style="left:1151.5px;top:683.80px;line-height:20px;font-size:13px;font-weight:400;color:#4d4d55;font-family:'Liberation Sans', sans-serif;">Employer City</div>
<div class="r" style="left:1443.5px;top:676.3px;width:78.5px;height:32.8px;background:#f1f1f1;border-radius:17px"></div>
<div class="t" style="left:1453.5px;top:685.00px;line-height:14px;font-size:9.8px;font-weight:400;color:#111;font-family:'Liberation Sans', sans-serif;-webkit-text-stroke:0.45px #111;">Redact</div>
<div class="r" style="left:1493.3px;top:682.5999999999999px;width:18.5px;height:18.5px;background:#15836a;border-radius:50%;box-shadow:0 1px 3px rgba(0,0,0,0.18)"></div>
<div class="r" style="left:300.5px;top:720.1999999999999px;width:404.2px;height:41.5px;background:#fff;border-radius:6px;box-shadow:0 2px 4px rgba(0,0,0,0.09)"></div>
<div class="t" style="left:316.9px;top:732.10px;line-height:20px;font-size:13px;font-weight:400;color:#4d4d55;font-family:'Liberation Sans', sans-serif;">Employer State</div>
<div class="r" style="left:608.9px;top:724.5999999999999px;width:78.5px;height:32.8px;background:#f1f1f1;border-radius:17px"></div>
<div class="t" style="left:618.9px;top:733.30px;line-height:14px;font-size:9.8px;font-weight:400;color:#111;font-family:'Liberation Sans', sans-serif;-webkit-text-stroke:0.45px #111;">Redact</div>
<div class="r" style="left:658.6999999999999px;top:730.8999999999999px;width:18.5px;height:18.5px;background:#15836a;border-radius:50%;box-shadow:0 1px 3px rgba(0,0,0,0.18)"></div>
<div class="r" style="left:717.4px;top:720.1999999999999px;width:404.2px;height:41.5px;background:#fff;border-radius:6px;box-shadow:0 2px 4px rgba(0,0,0,0.09)"></div>
<div class="t" style="left:733.8px;top:732.10px;line-height:20px;font-size:13px;font-weight:400;color:#4d4d55;font-family:'Liberation Sans', sans-serif;">Employer Country</div>
<div class="r" style="left:1025.8px;top:724.5999999999999px;width:78.5px;height:32.8px;background:#f1f1f1;border-radius:17px"></div>
<div class="t" style="left:1035.8px;top:733.30px;line-height:14px;font-size:9.8px;font-weight:400;color:#111;font-family:'Liberation Sans', sans-serif;-webkit-text-stroke:0.45px #111;">Redact</div>
<div class="r" style="left:1075.6px;top:730.8999999999999px;width:18.5px;height:18.5px;background:#15836a;border-radius:50%;box-shadow:0 1px 3px rgba(0,0,0,0.18)"></div>
<div class="r" style="left:1135.1px;top:720.1999999999999px;width:404.2px;height:41.5px;background:#fff;border-radius:6px;box-shadow:0 2px 4px rgba(0,0,0,0.09)"></div>
<div class="t" style="left:1151.5px;top:732.10px;line-height:20px;font-size:13px;font-weight:400;color:#4d4d55;font-family:'Liberation Sans', sans-serif;">Job Profile</div>
<div class="r" style="left:1443.5px;top:724.5999999999999px;width:78.5px;height:32.8px;background:#f1f1f1;border-radius:17px"></div>
<div class="r" style="left:1452.0px;top:730.8999999999999px;width:18.5px;height:18.5px;background:#4a80d4;border-radius:50%;box-shadow:0 1px 3px rgba(0,0,0,0.18)"></div>
<div class="t" style="left:1477.0px;top:733.30px;line-height:14px;font-size:10.2px;font-weight:400;color:#111;font-family:'Liberation Sans', sans-serif;-webkit-text-stroke:0.45px #111;">Orginial</div>
<div class="r" style="left:300.5px;top:768.5px;width:404.2px;height:41.5px;background:#fff;border-radius:6px;box-shadow:0 2px 4px rgba(0,0,0,0.09)"></div>
<div class="t" style="left:316.9px;top:780.40px;line-height:20px;font-size:13px;font-weight:400;color:#4d4d55;font-family:'Liberation Sans', sans-serif;">Job Period</div>
<div class="r" style="left:608.9px;top:772.9px;width:78.5px;height:32.8px;background:#f1f1f1;border-radius:17px"></div>
<div class="t" style="left:618.9px;top:781.60px;line-height:14px;font-size:9.8px;font-weight:400;color:#111;font-family:'Liberation Sans', sans-serif;-webkit-text-stroke:0.45px #111;">Redact</div>
<div class="r" style="left:658.6999999999999px;top:779.1999999999999px;width:18.5px;height:18.5px;background:#15836a;border-radius:50%;box-shadow:0 1px 3px rgba(0,0,0,0.18)"></div>
<div class="r" style="left:294px;top:860.1px;width:1251px;height:202.80000000000007px;background:#f1f1f3;box-shadow:-10px 10px 32px rgba(30,135,108,0.19);border-radius:2px"></div>
<svg class="r" style="left:313px;top:876.5px;" width="16" height="16" viewBox="0 0 16 16"><rect x="1.3" y="4" width="13.4" height="10.6" rx="2.5" stroke="#2d3e50" stroke-width="1.3" fill="none"/><path d="M5.5 4 V2.6 Q5.5 1.3 6.8 1.3 H9.2 Q10.5 1.3 10.5 2.6 V4 M1.3 7.4 Q8 10.5 14.7 7.4" stroke="#2d3e50" stroke-width="1.3" fill="none"/><circle cx="8" cy="8.9" r="1.2" stroke="#2d3e50" stroke-width="1.1" fill="#f1f1f3"/></svg>
<div class="t" style="left:334px;top:874.50px;line-height:20px;font-size:14.95px;font-weight:400;color:#121220;font-family:'Liberation Sans', sans-serif;-webkit-text-stroke:0.45px #121220;">Education Details</div>
<div class="r" style="left:300.5px;top:908.1px;width:404.2px;height:41.5px;background:#fff;border-radius:6px;box-shadow:0 2px 4px rgba(0,0,0,0.09)"></div>
<div class="t" style="left:316.9px;top:920.00px;line-height:20px;font-size:13px;font-weight:400;color:#4d4d55;font-family:'Liberation Sans', sans-serif;">Institution Name</div>
<div class="r" style="left:608.9px;top:912.5px;width:78.5px;height:32.8px;background:#f1f1f1;border-radius:17px"></div>
<div class="t" style="left:618.9px;top:921.20px;line-height:14px;font-size:9.8px;font-weight:400;color:#111;font-family:'Liberation Sans', sans-serif;-webkit-text-stroke:0.45px #111;">Redact</div>
<div class="r" style="left:658.6999999999999px;top:918.8px;width:18.5px;height:18.5px;background:#15836a;border-radius:50%;box-shadow:0 1px 3px rgba(0,0,0,0.18)"></div>
<div class="r" style="left:717.4px;top:908.1px;width:404.2px;height:41.5px;background:#fff;border-radius:6px;box-shadow:0 2px 4px rgba(0,0,0,0.09)"></div>
<div class="t" style="left:733.8px;top:920.00px;line-height:20px;font-size:13px;font-weight:400;color:#4d4d55;font-family:'Liberation Sans', sans-serif;">Institution City</div>
<div class="r" style="left:1025.8px;top:912.5px;width:78.5px;height:32.8px;background:#f1f1f1;border-radius:17px"></div>
<div class="t" style="left:1035.8px;top:921.20px;line-height:14px;font-size:9.8px;font-weight:400;color:#111;font-family:'Liberation Sans', sans-serif;-webkit-text-stroke:0.45px #111;">Redact</div>
<div class="r" style="left:1075.6px;top:918.8px;width:18.5px;height:18.5px;background:#15836a;border-radius:50%;box-shadow:0 1px 3px rgba(0,0,0,0.18)"></div>
<div class="r" style="left:1135.1px;top:908.1px;width:404.2px;height:41.5px;background:#fff;border-radius:6px;box-shadow:0 2px 4px rgba(0,0,0,0.09)"></div>
<div class="t" style="left:1151.5px;top:920.00px;line-height:20px;font-size:13px;font-weight:400;color:#4d4d55;font-family:'Liberation Sans', sans-serif;">Institution State</div>
<div class="r" style="left:1443.5px;top:912.5px;width:78.5px;height:32.8px;background:#f1f1f1;border-radius:17px"></div>
<div class="t" style="left:1453.5px;top:921.20px;line-height:14px;font-size:9.8px;font-weight:400;color:#111;font-family:'Liberation Sans', sans-serif;-webkit-text-stroke:0.45px #111;">Redact</div>
<div class="r" style="left:1493.3px;top:918.8px;width:18.5px;height:18.5px;background:#15836a;border-radius:50%;box-shadow:0 1px 3px rgba(0,0,0,0.18)"></div>
<div class="r" style="left:300.5px;top:956.4px;width:404.2px;height:41.5px;background:#fff;border-radius:6px;box-shadow:0 2px 4px rgba(0,0,0,0.09)"></div>
<div class="t" style="left:316.9px;top:968.30px;line-height:20px;font-size:13px;font-weight:400;color:#4d4d55;font-family:'Liberation Sans', sans-serif;">Institution Country</div>
<div class="r" style="left:608.9px;top:960.8px;width:78.5px;height:32.8px;background:#f1f1f1;border-radius:17px"></div>
<div class="t" style="left:618.9px;top:969.50px;line-height:14px;font-size:9.8px;font-weight:400;color:#111;font-family:'Liberation Sans', sans-serif;-webkit-text-stroke:0.45px #111;">Redact</div>
<div class="r" style="left:658.6999999999999px;top:967.0999999999999px;width:18.5px;height:18.5px;background:#15836a;border-radius:50%;box-shadow:0 1px 3px rgba(0,0,0,0.18)"></div>
<div class="r" style="left:717.4px;top:956.4px;width:404.2px;height:41.5px;background:#fff;border-radius:6px;box-shadow:0 2px 4px rgba(0,0,0,0.09)"></div>
<div class="t" style="left:733.8px;top:968.30px;line-height:20px;font-size:13px;font-weight:400;color:#4d4d55;font-family:'Liberation Sans', sans-serif;">Degree</div>
<div class="r" style="left:1025.8px;top:960.8px;width:78.5px;height:32.8px;background:#f1f1f1;border-radius:17px"></div>
<div class="r" style="left:1034.3px;top:967.0999999999999px;width:18.5px;height:18.5px;background:#4a80d4;border-radius:50%;box-shadow:0 1px 3px rgba(0,0,0,0.18)"></div>
<div class="t" style="left:1059.3px;top:969.50px;line-height:14px;font-size:10.2px;font-weight:400;color:#111;font-family:'Liberation Sans', sans-serif;-webkit-text-stroke:0.45px #111;">Orginial</div>
<div class="r" style="left:1135.1px;top:956.4px;width:404.2px;height:41.5px;background:#fff;border-radius:6px;box-shadow:0 2px 4px rgba(0,0,0,0.09)"></div>
<div class="t" style="left:1151.5px;top:968.30px;line-height:20px;font-size:13px;font-weight:400;color:#4d4d55;font-family:'Liberation Sans', sans-serif;">Period</div>
<div class="r" style="left:1443.5px;top:960.8px;width:78.5px;height:32.8px;background:#f1f1f1;border-radius:17px"></div>
<div class="t" style="left:1453.5px;top:969.50px;line-height:14px;font-size:9.8px;font-weight:400;color:#111;font-family:'Liberation Sans', sans-serif;-webkit-text-stroke:0.45px #111;">Redact</div>
<div class="r" style="left:1493.3px;top:967.0999999999999px;width:18.5px;height:18.5px;background:#15836a;border-radius:50%;box-shadow:0 1px 3px rgba(0,0,0,0.18)"></div>
<div class="r" style="left:300.5px;top:1004.7px;width:404.2px;height:41.5px;background:#fff;border-radius:6px;box-shadow:0 2px 4px rgba(0,0,0,0.09)"></div>
<div class="t" style="left:316.9px;top:1016.60px;line-height:20px;font-size:13px;font-weight:400;color:#4d4d55;font-family:'Liberation Sans', sans-serif;">Aggregate</div>
<div class="r" style="left:608.9px;top:1009.1px;width:78.5px;height:32.8px;background:#f1f1f1;border-radius:17px"></div>
<div class="t" style="left:618.9px;top:1017.80px;line-height:14px;font-size:9.8px;font-weight:400;color:#111;font-family:'Liberation Sans', sans-serif;-webkit-text-stroke:0.45px #111;">Redact</div>
<div class="r" style="left:658.6999999999999px;top:1015.4px;width:18.5px;height:18.5px;background:#15836a;border-radius:50%;box-shadow:0 1px 3px rgba(0,0,0,0.18)"></div>
<div class="r" style="left:294px;top:1096.2px;width:1251px;height:106.70000000000005px;background:#f1f1f3;box-shadow:-10px 10px 32px rgba(30,135,108,0.19);border-radius:2px"></div>
<svg class="r" style="left:313px;top:1112.6000000000001px;" width="16" height="16" viewBox="0 0 16 16"><rect x="1.3" y="1.3" width="13.4" height="13.4" rx="3.2" stroke="#2d3e50" stroke-width="1.3" fill="none"/><path d="M6 1.3 V14.7 M6 6 H14.7 M6 10.3 H14.7" stroke="#2d3e50" stroke-width="1.3" fill="none"/></svg>
<div class="t" style="left:334px;top:1110.60px;line-height:20px;font-size:15.15px;font-weight:400;color:#121220;font-family:'Liberation Sans', sans-serif;-webkit-text-stroke:0.45px #121220;">Other Details</div>
<div class="r" style="left:300.5px;top:1144.2px;width:404.2px;height:41.5px;background:#fff;border-radius:6px;box-shadow:0 2px 4px rgba(0,0,0,0.09)"></div>
<div class="t" style="left:316.9px;top:1156.10px;line-height:20px;font-size:13px;font-weight:400;color:#4d4d55;font-family:'Liberation Sans', sans-serif;">CandidateImage</div>
<div class="r" style="left:608.9px;top:1148.6000000000001px;width:78.5px;height:32.8px;background:#f1f1f1;border-radius:17px"></div>
<div class="t" style="left:618.9px;top:1157.30px;line-height:14px;font-size:9.8px;font-weight:400;color:#111;font-family:'Liberation Sans', sans-serif;-webkit-text-stroke:0.45px #111;">Redact</div>
<div class="r" style="left:658.6999999999999px;top:1154.9px;width:18.5px;height:18.5px;background:#15836a;border-radius:50%;box-shadow:0 1px 3px rgba(0,0,0,0.18)"></div>
<div class="r" style="left:717.4px;top:1144.2px;width:404.2px;height:41.5px;background:#fff;border-radius:6px;box-shadow:0 2px 4px rgba(0,0,0,0.09)"></div>
<div class="t" style="left:733.8px;top:1156.10px;line-height:20px;font-size:13px;font-weight:400;color:#4d4d55;font-family:'Liberation Sans', sans-serif;">References</div>
<div class="r" style="left:1025.8px;top:1148.6000000000001px;width:78.5px;height:32.8px;background:#f1f1f1;border-radius:17px"></div>
<div class="t" style="left:1035.8px;top:1157.30px;line-height:14px;font-size:9.8px;font-weight:400;color:#111;font-family:'Liberation Sans', sans-serif;-webkit-text-stroke:0.45px #111;">Redact</div>
<div class="r" style="left:1075.6px;top:1154.9px;width:18.5px;height:18.5px;background:#15836a;border-radius:50%;box-shadow:0 1px 3px rgba(0,0,0,0.18)"></div>
<div class="r" style="left:294px;top:1236.3px;width:1251px;height:154.5px;background:#f1f1f3;box-shadow:-10px 10px 32px rgba(30,135,108,0.19);border-radius:2px"></div>
<svg class="r" style="left:313px;top:1252.7px;" width="16" height="16" viewBox="0 0 16 16"><path d="M7.5 2.2 H4 Q1.3 2.2 1.3 5 V12 Q1.3 14.7 4 14.7 H11 Q13.8 14.7 13.8 12 V8.5" stroke="#2d3e50" stroke-width="1.3" fill="none" stroke-linecap="round"/><path d="M5.8 10.2 L6.3 7.6 L12 1.9 Q13 1 14 1.9 Q15 2.9 14 3.9 L8.3 9.7 Z" stroke="#2d3e50" stroke-width="1.3" fill="none" stroke-linejoin="round"/></svg>
<div class="t" style="left:334px;top:1250.70px;line-height:20px;font-size:15.25px;font-weight:400;color:#121220;font-family:'Liberation Sans', sans-serif;-webkit-text-stroke:0.45px #121220;">Abbreviation Fields</div>
<div class="r" style="left:300.5px;top:1284.3px;width:404.2px;height:41.5px;background:#fff;border-radius:6px;box-shadow:0 2px 4px rgba(0,0,0,0.09)"></div>
<div class="t" style="left:316.9px;top:1296.20px;line-height:20px;font-size:13px;font-weight:400;color:#4d4d55;font-family:'Liberation Sans', sans-serif;">Email</div>
<div class="r" style="left:608.9px;top:1288.7px;width:78.5px;height:32.8px;background:#f1f1f1;border-radius:17px"></div>
<div class="r" style="left:617.1999999999999px;top:1295.0px;width:18.5px;height:18.5px;background:#4a80d4;border-radius:50%;box-shadow:0 1px 3px rgba(0,0,0,0.18)"></div>
<div class="t" style="left:642.1px;top:1297.40px;line-height:14px;font-size:8.6px;font-weight:400;color:#111;font-family:'Liberation Sans', sans-serif;-webkit-text-stroke:0.45px #111;">OFF</div>
<div class="r" style="left:717.4px;top:1284.3px;width:404.2px;height:41.5px;background:#fff;border-radius:6px;box-shadow:0 2px 4px rgba(0,0,0,0.09)"></div>
<div class="t" style="left:733.8px;top:1296.20px;line-height:20px;font-size:13px;font-weight:400;color:#4d4d55;font-family:'Liberation Sans', sans-serif;">Name</div>
<div class="r" style="left:1025.8px;top:1288.7px;width:78.5px;height:32.8px;background:#f1f1f1;border-radius:17px"></div>
<div class="r" style="left:1034.1px;top:1295.0px;width:18.5px;height:18.5px;background:#4a80d4;border-radius:50%;box-shadow:0 1px 3px rgba(0,0,0,0.18)"></div>
<div class="t" style="left:1059.0px;top:1297.40px;line-height:14px;font-size:8.6px;font-weight:400;color:#111;font-family:'Liberation Sans', sans-serif;-webkit-text-stroke:0.45px #111;">OFF</div>
<div class="r" style="left:1135.1px;top:1284.3px;width:404.2px;height:41.5px;background:#fff;border-radius:6px;box-shadow:0 2px 4px rgba(0,0,0,0.09)"></div>
<div class="t" style="left:1151.5px;top:1296.20px;line-height:20px;font-size:13px;font-weight:400;color:#4d4d55;font-family:'Liberation Sans', sans-serif;">PhoneNumber</div>
<div class="r" style="left:1443.5px;top:1288.7px;width:78.5px;height:32.8px;background:#f1f1f1;border-radius:17px"></div>
<div class="r" style="left:1451.8px;top:1295.0px;width:18.5px;height:18.5px;background:#4a80d4;border-radius:50%;box-shadow:0 1px 3px rgba(0,0,0,0.18)"></div>
<div class="t" style="left:1476.7px;top:1297.40px;line-height:14px;font-size:8.6px;font-weight:400;color:#111;font-family:'Liberation Sans', sans-serif;-webkit-text-stroke:0.45px #111;">OFF</div>
<div class="r" style="left:300.5px;top:1332.6px;width:404.2px;height:41.5px;background:#fff;border-radius:6px;box-shadow:0 2px 4px rgba(0,0,0,0.09)"></div>
<div class="t" style="left:316.9px;top:1344.50px;line-height:20px;font-size:13px;font-weight:400;color:#4d4d55;font-family:'Liberation Sans', sans-serif;">Institution Name</div>
<div class="r" style="left:608.9px;top:1337.0px;width:78.5px;height:32.8px;background:#f1f1f1;border-radius:17px"></div>
<div class="r" style="left:617.1999999999999px;top:1343.3px;width:18.5px;height:18.5px;background:#4a80d4;border-radius:50%;box-shadow:0 1px 3px rgba(0,0,0,0.18)"></div>
<div class="t" style="left:642.1px;top:1345.70px;line-height:14px;font-size:8.6px;font-weight:400;color:#111;font-family:'Liberation Sans', sans-serif;-webkit-text-stroke:0.45px #111;">OFF</div>
<div class="r" style="left:717.4px;top:1332.6px;width:404.2px;height:41.5px;background:#fff;border-radius:6px;box-shadow:0 2px 4px rgba(0,0,0,0.09)"></div>
<div class="t" style="left:733.8px;top:1344.50px;line-height:20px;font-size:13px;font-weight:400;color:#4d4d55;font-family:'Liberation Sans', sans-serif;">Employer Name</div>
<div class="r" style="left:1025.8px;top:1337.0px;width:78.5px;height:32.8px;background:#f1f1f1;border-radius:17px"></div>
<div class="r" style="left:1034.1px;top:1343.3px;width:18.5px;height:18.5px;background:#4a80d4;border-radius:50%;box-shadow:0 1px 3px rgba(0,0,0,0.18)"></div>
<div class="t" style="left:1059.0px;top:1345.70px;line-height:14px;font-size:8.6px;font-weight:400;color:#111;font-family:'Liberation Sans', sans-serif;-webkit-text-stroke:0.45px #111;">OFF</div>
<svg class="r" style="left:479px;top:1253px;" width="15" height="15" viewBox="0 0 15 15"><circle cx="7.5" cy="7.5" r="7.3" fill="#111"/><circle cx="7.5" cy="4.2" r="1.15" fill="#fff"/><path d="M6 6.6 H8.3 V10.8 M6 11 H9" stroke="#fff" stroke-width="1.5" fill="none"/></svg>
<div class="r" style="left:294px;top:1424.9px;width:1251px;height:159.79999999999995px;background:#f2f2f2;box-shadow:-10px 10px 32px rgba(30,135,108,0.19);border-radius:3px"></div>
<div class="t" style="left:306.4px;top:1439.00px;line-height:20px;font-size:13px;font-weight:400;color:#111;font-family:'Liberation Sans', sans-serif;-webkit-text-stroke:0.45px #111;">Resume Format</div>
<svg class="r" style="left:306.5px;top:1466px;" width="15" height="16" viewBox="0 0 15 16"><path d="M3.3 1 H9.5 L13.5 5 V12.5 Q13.5 15 11 15 H4 Q1.5 15 1.5 12.5 V3.5 Q1.5 1 4 1" stroke="#4a4a4a" stroke-width="1.2" fill="none"/><path d="M9.5 1 V3.8 Q9.5 5 10.7 5 H13.5 M4.3 9.6 H7 M4.3 12 H10" stroke="#4a4a4a" stroke-width="1.2" fill="none"/></svg>
<div class="t" style="left:326.6px;top:1464.80px;line-height:20px;font-size:13.25px;font-weight:400;color:#2a2a33;font-family:'Liberation Sans', sans-serif;">Select the preferred Resume format you want to upload when exporting candidate data from Browser Extension</div>
<div class="r" style="left:306.2px;top:1502.6px;width:208px;height:32px;background:#fff;border:1px solid #d3d7db;border-radius:4px;box-sizing:border-box"></div>
<div class="t" style="left:318.6px;top:1510.00px;line-height:20px;font-size:13px;font-weight:400;color:#4f5560;font-family:'Liberation Sans', sans-serif;">Both</div>
<svg class="r" style="left:499px;top:1514px;" width="12" height="10" viewBox="0 0 12 10"><path d="M2.5 2.8 L6 6.3 L9.5 2.8" stroke="#222" stroke-width="1.6" fill="none" stroke-linecap="round" stroke-linejoin="round"/></svg>
<div class="t" style="left:1155.6px;top:1549.00px;line-height:20px;font-size:12.9px;font-weight:400;color:#111;font-family:'Liberation Sans', sans-serif;">For Use Case Video,</div>
<div class="t" style="left:1278.5px;top:1549.00px;line-height:20px;font-size:13.2px;font-weight:400;color:#15836a;font-family:'Liberation Sans', sans-serif;">Click here</div>
<div class="t" style="left:1350.7px;top:1549.00px;line-height:20px;font-size:13.2px;font-weight:400;color:#111;font-family:'Liberation Sans', sans-serif;letter-spacing:0.2px">For Documentation,</div>
<div class="t" style="left:1474.7px;top:1549.00px;line-height:20px;font-size:13.2px;font-weight:400;color:#15836a;font-family:'Liberation Sans', sans-serif;">Click here</div>
<div class="r" style="left:1590px;top:0px;width:3px;height:1600px;background:#c9c9c9"></div>
</body></html>
